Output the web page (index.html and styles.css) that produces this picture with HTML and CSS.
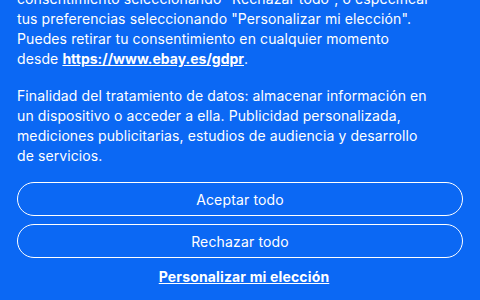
FILE: index.html
```html
<!DOCTYPE html>
<html lang="es">
<head>
<meta charset="utf-8">
<link rel="stylesheet" href="styles.css">
</head>
<body>
<div class="panel">
  <div class="text">
    <p>consentimiento seleccionando "Rechazar todo", o especificar<br>tus preferencias seleccionando "Personalizar mi elección".<br>Puedes retirar tu consentimiento en cualquier momento<br>desde <a class="link" href="#">https://www.ebay.es/gdpr</a>.</p>
    <p>Finalidad del tratamiento de datos: almacenar información en<br>un dispositivo o acceder a ella. Publicidad personalizada,<br>mediciones publicitarias, estudios de audiencia y desarrollo<br>de servicios.</p>
  </div>
  <div class="actions">
    <button class="btn">Aceptar todo</button>
    <button class="btn">Rechazar todo</button>
    <a class="custom" href="#">Personalizar mi elección</a>
  </div>
</div>
</body>
</html>
```
FILE: styles.css
```css
html, body {
  margin: 0;
  padding: 0;
  background: #0b68f4;
  overflow: hidden;
}
.panel {
  margin-top: -11px;
  padding: 0 17px;
  color: #fff;
  font-family: Inter, "Liberation Sans", sans-serif;
  font-size: 14px;
  line-height: 20px;
}
.text {
  letter-spacing: 0.1px;
}
.text p {
  margin: 0 0 17px 0;
}
.text p:last-child {
  margin-bottom: 0;
}
.link {
  color: #fff;
  font-weight: 700;
  letter-spacing: 0;
  text-decoration: underline;
}
.actions {
  margin-top: 16px;
  display: flex;
  flex-direction: column;
  gap: 8px;
  align-items: center;
}
.btn {
  width: 100%;
  height: 34px;
  border: 1px solid #fff;
  border-radius: 17px;
  background: transparent;
  color: #fff;
  font-family: Inter, "Liberation Sans", sans-serif;
  font-size: 14px;
  letter-spacing: 0.15px;
}
.custom {
  margin: 1px 0 0 8px;
  color: #fff;
  font-weight: 700;
  letter-spacing: 0.15px;
  text-decoration: underline;
  line-height: 20px;
}
```
